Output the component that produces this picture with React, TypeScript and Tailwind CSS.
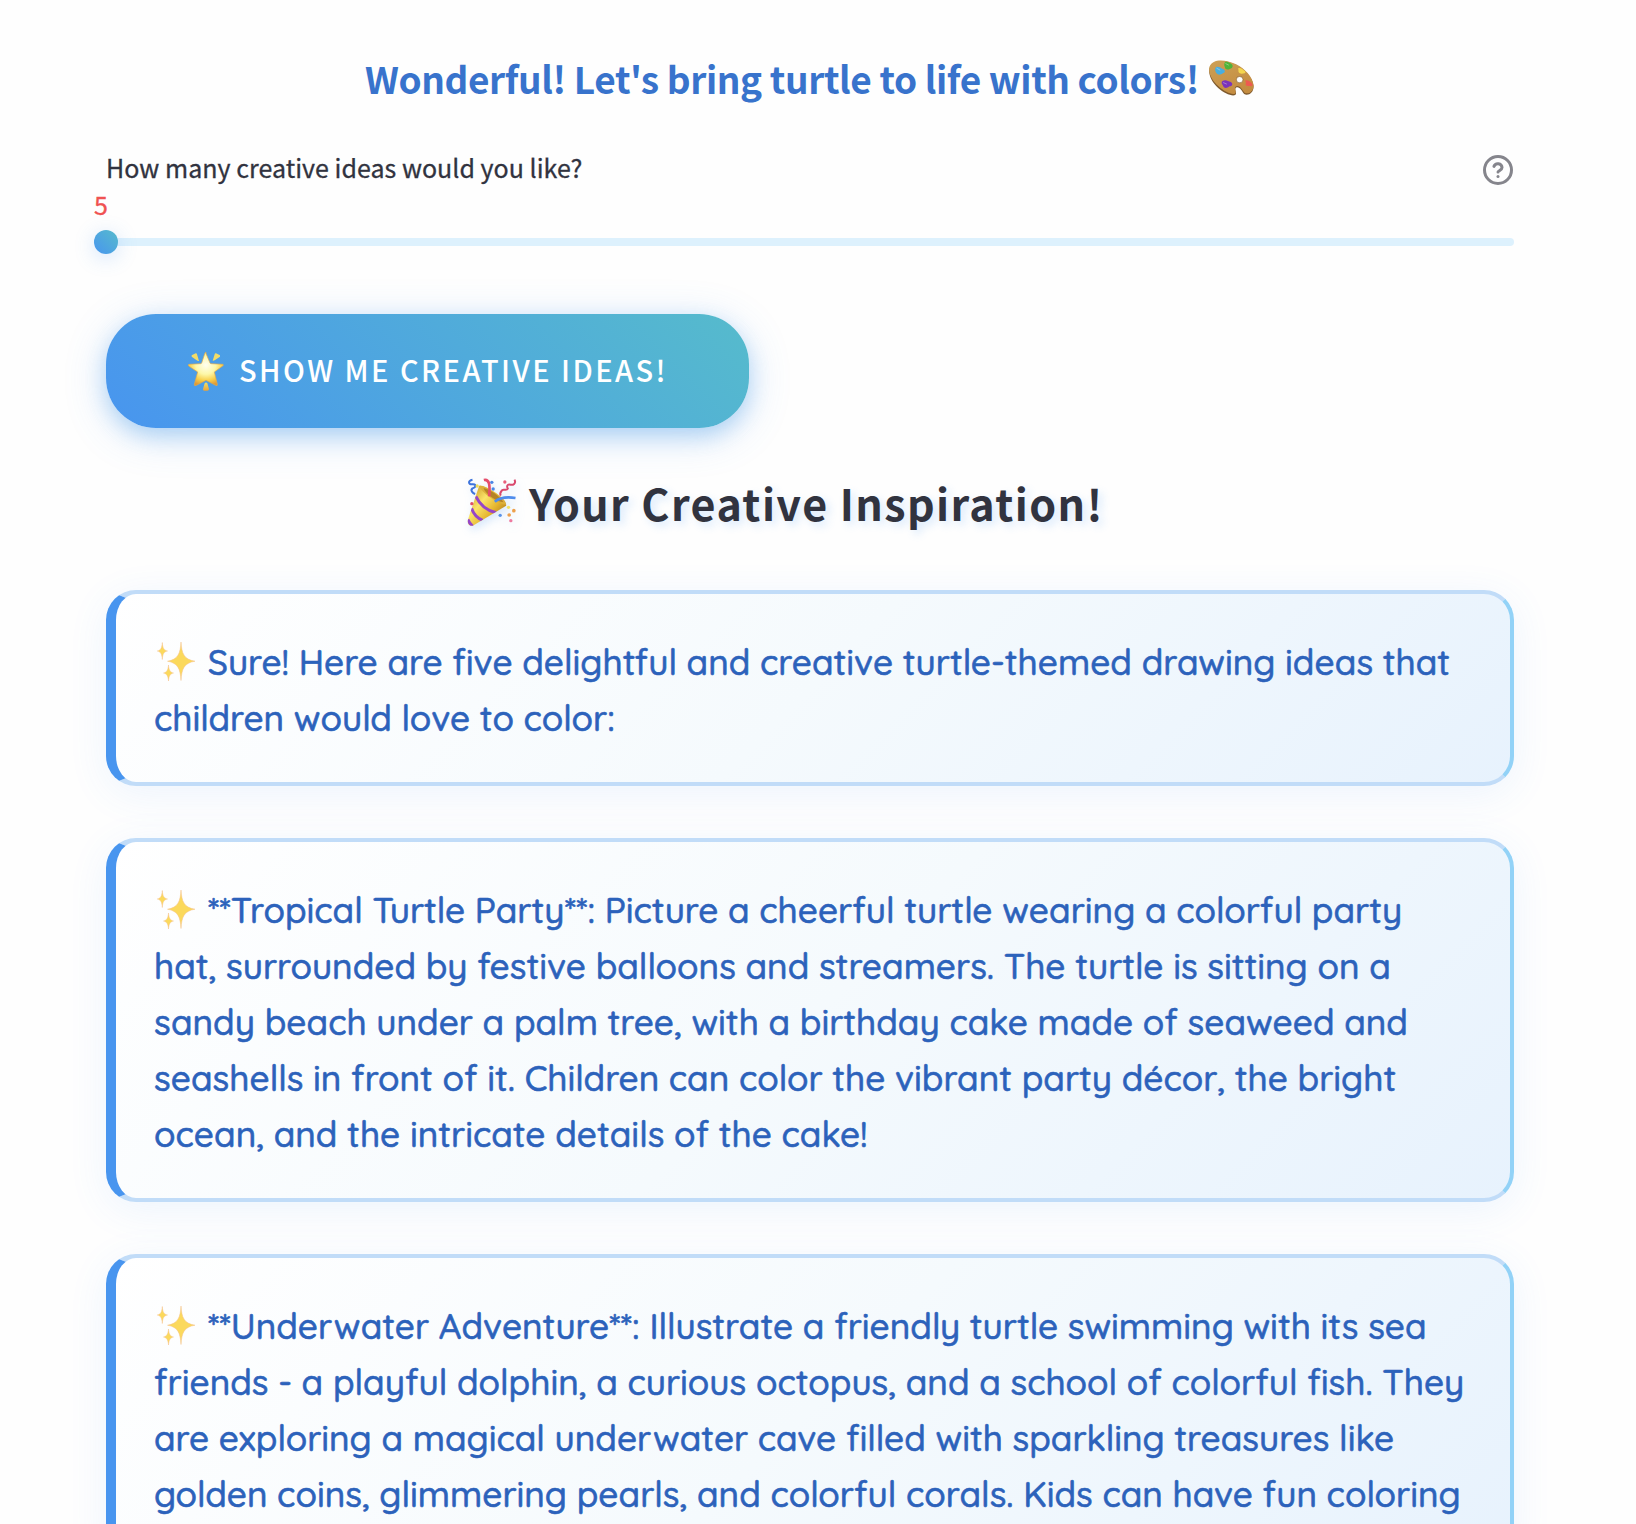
import type { ReactNode } from "react";

function PaletteIcon() {
  return (
    <svg viewBox="40 35 140 108" className="h-9 w-[47px] shrink-0" role="img" aria-label="Palette">
      <defs>
        <linearGradient id="wood" x1="0" y1="0" x2="0.6" y2="1">
          <stop offset="0" stopColor="#cda055" />
          <stop offset="1" stopColor="#c48c40" />
        </linearGradient>
      </defs>
      <path
        d="M43 66C42 82 53 104 70 119C87 134 111 145 121 140C128 136 118 124 123 118C133 112 140 126 148 137C160 144 178 133 176 112C173 88 149 62 124 50C99 37 72 34 57 43C48 49 43 57 43 66Z"
        fill="#7f5a2d"
      />
      <path
        fillRule="evenodd"
        d="M43 62C42 78 54 99 71 114C88 130 111 140 120 136C127 132 117 121 122 115C133 108 141 123 149 133C160 140 178 129 176 109C173 86 149 60 124 48C99 36 72 33 57 41C48 46 43 53 43 62ZM124 94a10.5 10 0 1 0 21 0a10.5 10 0 1 0 -21 0Z"
        fill="url(#wood)"
      />
      <ellipse cx="134.500" cy="94" rx="10" ry="9.500" fill="#fefefe" stroke="#9a6d33" strokeWidth="2" />
      <path d="M64 56C70 53 78 58 86 63C93 68 90 74 84 75C76 82 67 80 63 72C60 66 60 59 64 56Z" fill="#48aee0" />
      <path d="M91 41C98 38 104 44 110 47C117 53 112 61 106 61C97 67 90 62 90 56C87 50 88 44 91 41Z" fill="#4fb43a" />
      <path d="M130 60C137 57 144 64 151 69C154 75 148 76 142 76C134 78 129 70 131 66Z" fill="#f4d64e" />
      <path d="M83 98C92 92 99 98 108 101C116 106 112 114 104 114C95 122 85 119 84 111C79 106 80 100 83 98Z" fill="#7a33bb" />
      <path d="M151 97C157 93 164 98 170 104C177 110 172 115 164 113C155 114 149 110 154 104Z" fill="#ee5a50" />
      <path d="M66 60l9 5M93 46l8 4M86 103l9 4" stroke="#fff" strokeOpacity=".35" strokeWidth="3" strokeLinecap="round" />
    </svg>
  );
}

function GlowingStarIcon() {
  return (
    <svg viewBox="117 33 108 117" className="h-[39px] w-9 shrink-0" role="img" aria-label="Glowing star">
      <defs>
        <radialGradient id="starFill" cx="0.5" cy="0.38" r="0.62">
          <stop offset="0" stopColor="#fffef0" />
          <stop offset="0.45" stopColor="#fdf7a8" />
          <stop offset="0.75" stopColor="#f8d04c" />
          <stop offset="1" stopColor="#e09a35" />
        </radialGradient>
        <linearGradient id="rayFill" x1="0" y1="0" x2="0" y2="1">
          <stop offset="0" stopColor="#f0e06a" />
          <stop offset="1" stopColor="#e8a33a" />
        </linearGradient>
      </defs>
      <path
        d="M170 35L183 66Q184 68 186 68L221 70Q225 71 222 74L196 93L205 130Q206 136 200 133L171 118L142 133Q135 136 136 130L146 93L119 75Q116 71 120 70L155 68Q157 68 158 66L168 36Q170 32 172 36Z"
        fill="url(#starFill)"
        stroke="#e5ab48"
        strokeWidth="2"
        strokeLinejoin="round"
      />
      <path d="M128 43L140 37Q143 36 144 40L150 60Q147 61 143 58L128 47Z" fill="#f2dc68" />
      <path d="M213 43L201 37Q198 36 197 40L191 59Q194 60 198 57L213 47Z" fill="#f2dc68" />
      <path d="M167 127Q171 122 175 127L180 144Q180 149 175 149H166Q161 149 162 144Z" fill="url(#rayFill)" />
    </svg>
  );
}

function PartyPopperIcon() {
  return (
    <svg
      viewBox="20 20 152 150"
      className="h-[50px] w-[51px] shrink-0 drop-shadow-[2px_4px_4px_rgba(72,149,239,0.2)]"
      role="img"
      aria-label="Party popper"
    >
      <defs>
        <linearGradient id="cone" x1="0" y1="0.2" x2="0.8" y2="0.9">
          <stop offset="0" stopColor="#c89420" />
          <stop offset="0.4" stopColor="#fbe46a" />
          <stop offset="0.7" stopColor="#e5b52e" />
          <stop offset="1" stopColor="#a8761e" />
        </linearGradient>
        <clipPath id="coneClip">
          <path d="M59 46L24 152Q24 168 40 166L140 106Q143 92 110 68Q72 42 59 46Z" />
        </clipPath>
      </defs>
      <g clipPath="url(#coneClip)">
        <rect x="20" y="40" width="125" height="130" fill="url(#cone)" />
        <path d="M49 78Q68 118 110 127M36 114Q46 142 70 150M25 147Q30 160 40 168" fill="none" stroke="#9646c8" strokeWidth="9" />
      </g>
      <path d="M60 46C78 44 136 82 140 103C122 104 62 66 60 46Z" fill="#dcb03a" />
      <path d="M72 53C90 56 122 78 132 96C112 94 78 72 72 53Z" fill="#b58326" />
      <path d="M106 94C119 83 141 79 168 83" fill="none" stroke="#4e8cec" strokeWidth="8" />
      <path d="M73 29C90 25 92 44 89 78" fill="none" stroke="#e64d6b" strokeWidth="8" />
      <path d="M39 28C24 31 27 43 37 42C51 40 51 50 39 54C31 60 40 69 47 71" fill="none" stroke="#3e74dc" strokeWidth="6" />
      <path d="M165 28C171 40 160 45 153 43C143 40 141 48 145 55C141 64 129 52 126 62C121 68 122 73 124 76" fill="none" stroke="#d9486d" strokeWidth="6" />
      <g>
        <circle cx="97" cy="36" r="5" fill="#4c86e6" />
        <circle cx="53" cy="47" r="5" fill="#f0dc55" />
        <circle cx="101" cy="56" r="5" fill="#4c86e6" />
        <circle cx="136" cy="35" r="5" fill="#e8607c" />
        <circle cx="37" cy="100" r="5" fill="#e05068" />
        <circle cx="147" cy="111" r="5" fill="#f2e266" />
        <circle cx="163" cy="121" r="5.5" fill="#eda04c" />
        <circle cx="122" cy="135" r="5" fill="#5b93e8" />
        <circle cx="149" cy="134" r="5.5" fill="#eda04c" />
        <circle cx="154" cy="151" r="5" fill="#ee7aa0" />
      </g>
    </svg>
  );
}

function SparklesIcon() {
  return (
    <svg viewBox="0 0 44 40" className="inline-block h-10 w-11 align-[-6px]" role="img" aria-label="Sparkles">
      <g fill="#fbd95c" stroke="#f5c08c" strokeWidth="0.5">
        <path d="M27 1C27.7 12.500 30 18.500 41 20.200C30 22 27.700 28 27 39.500C26.300 28 24 22 13.500 20.200C24 18.500 26.300 12.500 27 1Z" />
        <path d="M8.300 1.500C8.700 7 9.800 9.200 13.500 10C9.800 10.800 8.700 13 8.300 18.500C7.900 13 6.800 10.800 3.300 10C6.800 9.200 7.900 7 8.300 1.500Z" />
        <path d="M14.500 24C14.900 29 16.100 31.200 19.500 32C16.100 32.800 14.900 35 14.500 40C14.100 35 12.900 32.800 9.500 32C12.900 31.200 14.100 29 14.500 24Z" />
      </g>
    </svg>
  );
}

function HelpIcon() {
  return (
    <svg viewBox="0 0 24 24" className="h-9 w-9" fill="none" stroke="#85858c" strokeWidth="2" strokeLinecap="round" strokeLinejoin="round">
      <circle cx="12" cy="12" r="9" />
      <path d="M9.3 9.6a2.8 2.8 0 0 1 5.4 .8c0 1.8-2.7 2.2-2.7 3" />
      <path d="M12 16.3h.01" />
    </svg>
  );
}

function IdeaCard({ children }: { children: ReactNode }) {
  return (
    <article className="rounded-[30px] border-4 border-l-[10px] border-[#c1dcf8] border-r-[#92d2f7] border-l-[#4895ef] bg-[linear-gradient(135deg,#ffffff,#f5fafd_50%,#e7f2fd)] bg-origin-border px-[38px] pt-10 pb-9 font-['Quicksand',sans-serif] text-[35.2px] leading-14 font-medium text-[#2c62bb] shadow-[0_8px_40px_rgba(72,149,239,0.09)] [-webkit-text-stroke:0.6px_#2c62bb]">
      <p className="-mr-5">
        <SparklesIcon /> {children}
      </p>
    </article>
  );
}

export default function App() {
  return (
    <main className="h-[1524px] overflow-hidden bg-[#fefefe] pt-12 pr-[122px] pl-[106px] font-['Noto_Sans_CJK_SC',sans-serif] text-[#31333f]">
      <h3 className="flex h-15 items-center justify-center gap-[9px] text-[37px] leading-[60px] font-semibold tracking-[-0.4px] whitespace-nowrap text-[#3873cc]">
        Wonderful! Let's bring turtle to life with colors!
        <PaletteIcon />
      </h3>

      <section className="mt-11">
        <div className="flex h-[30px] items-center justify-between text-[25px] leading-[30px]">
          <label className="tracking-[0.03px] [-webkit-text-stroke:0.3px_#31333f]">How many creative ideas would you like?</label>
          <div className="mt-1.5 -mr-0.5">
            <HelpIcon />
          </div>
        </div>
        <div className="mt-[7px] -ml-3 h-[30px] text-[25px] leading-[30px] text-[#f05252] [-webkit-text-stroke:0.3px_#f05252]">5</div>
        <div className="mt-[11px] -ml-3 flex h-6 items-center">
          <div className="z-10 size-6 shrink-0 rounded-full bg-[linear-gradient(45deg,#4895ef,#56bbcc)] shadow-[0_4px_20px_rgba(72,149,239,0.25)]" />
          <div className="-ml-3 h-2 grow rounded-full bg-[#ddf1fd]" />
        </div>
      </section>

      <button className="mt-15 flex h-[114px] w-[643px] items-center justify-center gap-[15px] rounded-[50px] bg-[linear-gradient(45deg,#4895ef,#56bbcc)] pl-px text-[29px] font-medium tracking-[2.45px] whitespace-nowrap text-white shadow-[0_8px_40px_rgba(72,149,239,0.25),0_8px_20px_rgba(72,160,230,0.3)]">
        <GlowingStarIcon />
        <span className="pb-[4px] leading-[40px]">SHOW ME CREATIVE IDEAS!</span>
      </button>

      <h2 className="mt-11 mb-[58px] flex h-15 items-center justify-center gap-3 pr-[50px] text-[43px] leading-[60px] font-semibold tracking-[1.4px] whitespace-nowrap [text-shadow:4px_4px_8px_rgba(72,149,239,0.2)]">
        <PartyPopperIcon />
        Your Creative Inspiration!
      </h2>

      <section className="flex flex-col gap-[52px]">
        <IdeaCard>
          Sure! Here are five delightful and creative turtle-themed drawing ideas that
          <br />
          children would love to color:
        </IdeaCard>
        <IdeaCard>
          **Tropical Turtle Party**: Picture a cheerful turtle wearing a colorful party
          <br />
          hat, surrounded by festive balloons and streamers. The turtle is sitting on a
          <br />
          sandy beach under a palm tree, with a birthday cake made of seaweed and
          <br />
          seashells in front of it. Children can color the vibrant party décor, the bright
          <br />
          ocean, and the intricate details of the cake!
        </IdeaCard>
        <IdeaCard>
          **Underwater Adventure**: Illustrate a friendly turtle swimming with its sea
          <br />
          friends - a playful dolphin, a curious octopus, and a school of colorful fish. They
          <br />
          are exploring a magical underwater cave filled with sparkling treasures like
          <br />
          golden coins, glimmering pearls, and colorful corals. Kids can have fun coloring
        </IdeaCard>
      </section>
    </main>
  );
}
